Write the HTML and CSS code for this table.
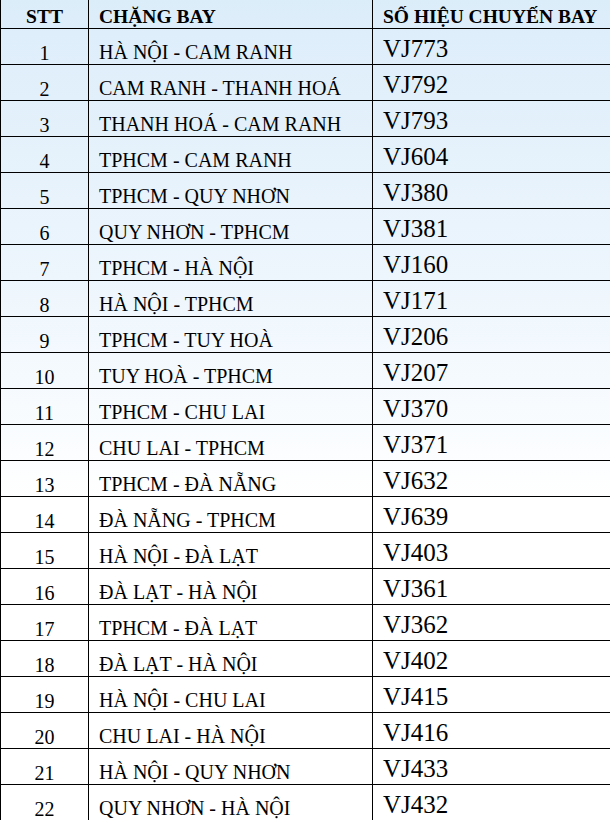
FILE: index.html
```html
<!DOCTYPE html>
<html lang="vi">
<head>
<meta charset="utf-8">
<title>Chặng bay</title>
<link rel="stylesheet" href="styles.css">
</head>
<body>
<div class="table">
  <div class="row head">
    <div class="cell c1">STT</div>
    <div class="cell c2">CHẶNG BAY</div>
    <div class="cell c3">SỐ HIỆU CHUYẾN BAY</div>
  </div>
  <div class="row"><div class="cell c1">1</div><div class="cell c2">HÀ NỘI - CAM RANH</div><div class="cell c3">VJ773</div></div>
  <div class="row"><div class="cell c1">2</div><div class="cell c2">CAM RANH - THANH HOÁ</div><div class="cell c3">VJ792</div></div>
  <div class="row"><div class="cell c1">3</div><div class="cell c2">THANH HOÁ - CAM RANH</div><div class="cell c3">VJ793</div></div>
  <div class="row"><div class="cell c1">4</div><div class="cell c2">TPHCM - CAM RANH</div><div class="cell c3">VJ604</div></div>
  <div class="row"><div class="cell c1">5</div><div class="cell c2">TPHCM - QUY NHƠN</div><div class="cell c3">VJ380</div></div>
  <div class="row"><div class="cell c1">6</div><div class="cell c2">QUY NHƠN - TPHCM</div><div class="cell c3">VJ381</div></div>
  <div class="row"><div class="cell c1">7</div><div class="cell c2">TPHCM - HÀ NỘI</div><div class="cell c3">VJ160</div></div>
  <div class="row"><div class="cell c1">8</div><div class="cell c2">HÀ NỘI - TPHCM</div><div class="cell c3">VJ171</div></div>
  <div class="row"><div class="cell c1">9</div><div class="cell c2">TPHCM - TUY HOÀ</div><div class="cell c3">VJ206</div></div>
  <div class="row"><div class="cell c1">10</div><div class="cell c2">TUY HOÀ - TPHCM</div><div class="cell c3">VJ207</div></div>
  <div class="row"><div class="cell c1">11</div><div class="cell c2">TPHCM - CHU LAI</div><div class="cell c3">VJ370</div></div>
  <div class="row"><div class="cell c1">12</div><div class="cell c2">CHU LAI - TPHCM</div><div class="cell c3">VJ371</div></div>
  <div class="row"><div class="cell c1">13</div><div class="cell c2">TPHCM - ĐÀ NẴNG</div><div class="cell c3">VJ632</div></div>
  <div class="row"><div class="cell c1">14</div><div class="cell c2">ĐÀ NẴNG - TPHCM</div><div class="cell c3">VJ639</div></div>
  <div class="row"><div class="cell c1">15</div><div class="cell c2">HÀ NỘI - ĐÀ LẠT</div><div class="cell c3">VJ403</div></div>
  <div class="row"><div class="cell c1">16</div><div class="cell c2">ĐÀ LẠT - HÀ NỘI</div><div class="cell c3">VJ361</div></div>
  <div class="row"><div class="cell c1">17</div><div class="cell c2">TPHCM - ĐÀ LẠT</div><div class="cell c3">VJ362</div></div>
  <div class="row"><div class="cell c1">18</div><div class="cell c2">ĐÀ LẠT - HÀ NỘI</div><div class="cell c3">VJ402</div></div>
  <div class="row"><div class="cell c1">19</div><div class="cell c2">HÀ NỘI - CHU LAI</div><div class="cell c3">VJ415</div></div>
  <div class="row"><div class="cell c1">20</div><div class="cell c2">CHU LAI - HÀ NỘI</div><div class="cell c3">VJ416</div></div>
  <div class="row"><div class="cell c1">21</div><div class="cell c2">HÀ NỘI - QUY NHƠN</div><div class="cell c3">VJ433</div></div>
  <div class="row"><div class="cell c1">22</div><div class="cell c2">QUY NHƠN - HÀ NỘI</div><div class="cell c3">VJ432</div></div>
</div>
</body>
</html>
```
FILE: styles.css
```css
html {
  background: #ffffff;
}
body {
  margin: 0;
  min-height: 820px;
  background: linear-gradient(to bottom, #dcedfa 0px, #e8f3fc 200px, #f5fafe 380px, #ffffff 500px);
  font-family: "Liberation Serif", "Times New Roman", serif;
  color: #000;
}
.table {
  width: 610px;
}
.row {
  display: grid;
  grid-template-columns: 88px 284px 1fr;
  height: 36px;
  box-sizing: border-box;
  border-bottom: 1px solid #000;
}
.row.head {
  height: 29px;
}
.cell {
  box-sizing: border-box;
  border-left: 1px solid #000;
  display: flex;
  align-items: flex-end;
  white-space: nowrap;
}
.c1 {
  justify-content: center;
  font-size: 20px;
  line-height: 20px;
  padding-bottom: 1px;
}
.c2 {
  padding-left: 10px;
  font-size: 20px;
  line-height: 20px;
  padding-bottom: 2px;
}
.c3 {
  padding-left: 10px;
  font-size: 25px;
  line-height: 25px;
  padding-bottom: 3px;
}
.head .cell {
  font-weight: bold;
  font-size: 19.5px;
  line-height: 19.5px;
  padding-bottom: 2px;
}
```
